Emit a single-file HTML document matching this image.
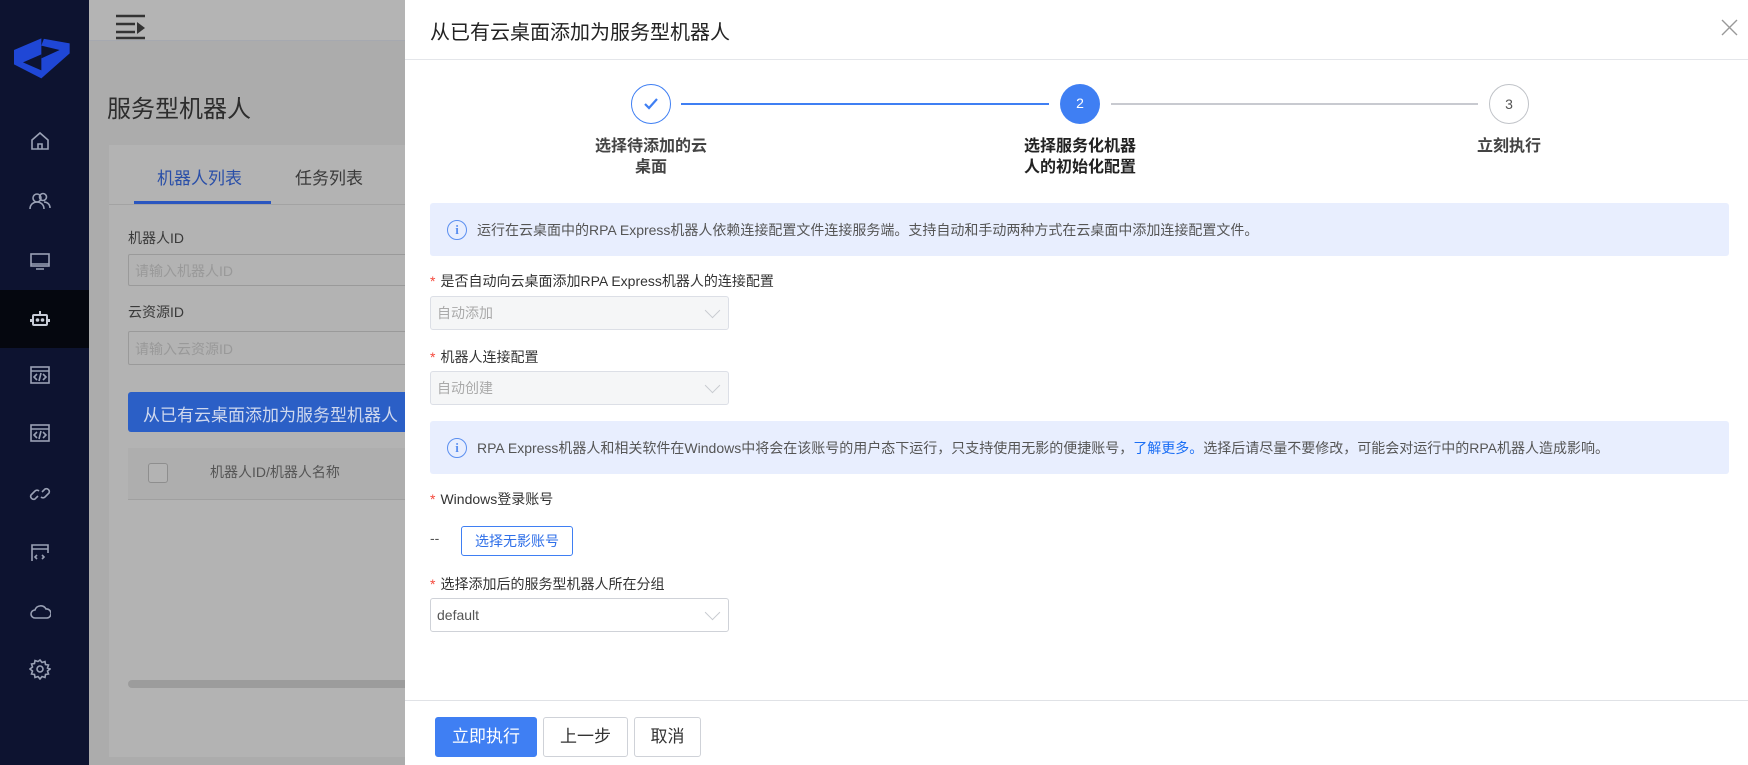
<!DOCTYPE html>
<html><head><meta charset="utf-8"><style>
*{box-sizing:border-box;margin:0;padding:0}
html,body{width:1748px;height:765px;overflow:hidden}
body{position:relative;font-family:"Liberation Sans","Noto Sans CJK SC",sans-serif;background:#acacac;color:#333}
.abs{position:absolute}
.side{left:0;top:0;width:89px;height:765px;background:#0d1330}
.side svg{position:absolute;left:29px}
.hdr{left:89px;top:0;width:320px;height:41px;background:#b4b4b4;border-bottom:1px solid #a6a9b0}
.card{left:109px;top:145px;width:300px;height:612px;background:#b3b3b3}
.panel{left:405px;top:0;width:1343px;height:765px;background:#fff}
.t14{font-size:14px}
.info{left:25px;width:1299px;background:#e8eefe;border-radius:3px;font-size:14px;color:#555;line-height:20px}
.info i{position:absolute;left:17px;top:50%;margin-top:-10px;width:20px;height:20px;border:1.8px solid #5b8ff0;border-radius:50%;color:#5b8ff0;font-style:normal;font-size:13px;text-align:center;line-height:17px;font-family:"Liberation Serif",serif;font-weight:bold}
.info span{position:absolute;left:47px;top:50%;margin-top:-10px;white-space:nowrap}
.lbl{left:25px;font-size:14px;color:#333;white-space:nowrap}
.lbl b{color:#f5483b;font-weight:normal;margin-right:5px}
.sel{left:25px;width:299px;height:34px;border:1px solid #dcdfe6;border-radius:3px;background:#f5f6f7;font-size:14px;color:#aaa;padding-left:6px;line-height:32px}
.sel:after{content:"";position:absolute;right:10px;top:8px;width:10px;height:10px;border-right:1.5px solid #c8cbd0;border-bottom:1.5px solid #c8cbd0;transform:rotate(45deg)}
.circ{width:40px;height:40px;border-radius:50%;text-align:center;line-height:38px;font-size:14px;top:84px}
.slbl{width:118px;text-align:center;font-weight:bold;font-size:16px;line-height:21px;top:136px;color:#444}
.btn{top:717px;height:40px;border:1px solid #cfd2d8;border-radius:3px;font-size:17px;text-align:center;line-height:38px;color:#333;background:#fff}
</style></head><body>
<div class="abs side">
<svg style="left:8px;top:25px" width="70" height="60" viewBox="0 0 210 180"><polygon points="18,75 100,40 185,55 185,85 100,160 18,118" fill="#1f47d6"/><polygon points="100,62 155,75 100,100" fill="#0d1330"/><polygon points="100,88 45,112 100,136" fill="#0d1330"/><polygon points="100,40 108,40 100,62" fill="#0d1330"/></svg>
<svg style="top:130px" width="22" height="22" viewBox="0 0 22 22" fill="none" stroke="#9aa1b5" stroke-width="1.6"><path d="M3 10L11 3l8 7v9H3z M9 19v-5h4v5"/></svg>
<svg style="top:190px" width="22" height="22" viewBox="0 0 22 22" fill="none" stroke="#9aa1b5" stroke-width="1.6"><circle cx="8" cy="8" r="4"/><circle cx="14" cy="7" r="3.5"/><path d="M1 19c0-5 4-7 7-7s7 2 7 7M15 12c3 0 6 2 6 6"/></svg>
<svg style="top:250px" width="22" height="22" viewBox="0 0 22 22" fill="none" stroke="#9aa1b5" stroke-width="1.6"><rect x="2" y="4" width="18" height="12"/><path d="M2 14h18M7 19h8"/></svg>
<div class="abs" style="left:0;top:290px;width:89px;height:58px;background:#05070f"></div>
<svg style="top:308px" width="22" height="22" viewBox="0 0 22 22" fill="none" stroke="#c8ccd8" stroke-width="2"><rect x="4" y="7" width="14" height="10" rx="1"/><path d="M11 3v4M2 11v3M20 11v3"/><circle cx="8.5" cy="12" r=".8" fill="#c8ccd8"/><circle cx="13.5" cy="12" r=".8" fill="#c8ccd8"/></svg>
<svg style="top:364px" width="22" height="22" viewBox="0 0 22 22" fill="none" stroke="#9aa1b5" stroke-width="1.6"><rect x="2" y="3" width="18" height="16"/><path d="M2 7h18M8 10l-3 3 3 3M14 10l3 3-3 3M12 9l-2 8"/></svg>
<svg style="top:422px" width="22" height="22" viewBox="0 0 22 22" fill="none" stroke="#9aa1b5" stroke-width="1.6"><rect x="2" y="3" width="18" height="16"/><path d="M2 7h18M8 10l-3 3 3 3M14 10l3 3-3 3M12 9l-2 8"/></svg>
<svg style="top:483px" width="22" height="22" viewBox="0 0 22 22" fill="none" stroke="#9aa1b5" stroke-width="1.6"><path d="M9 13l-3 3a3 3 0 01-4-4l4-4a3 3 0 014 0M13 9l3-3a3 3 0 014 4l-4 4a3 3 0 01-4 0"/></svg>
<svg style="top:542px" width="22" height="22" viewBox="0 0 22 22" fill="none" stroke="#9aa1b5" stroke-width="1.6"><path d="M3 19V3h16v8M3 7h16M8 13l-2 2 2 2M13 13l2 2-2 2"/></svg>
<svg style="top:601px" width="22" height="22" viewBox="0 0 22 22" fill="none" stroke="#9aa1b5" stroke-width="1.6"><path d="M6 17a4 4 0 010-8 6 6 0 0111-1 4.5 4.5 0 011 9z"/></svg>
<svg style="top:658px" width="22" height="22" viewBox="0 0 22 22" fill="none" stroke="#9aa1b5" stroke-width="1.6"><circle cx="11" cy="11" r="3"/><path d="M11 2l2 2.5 3-1 .5 3 3 .5-1 3L21 11l-2.5 2 1 3-3 .5-.5 3-3-1L11 21l-2-2.5-3 1-.5-3-3-.5 1-3L1 11l2.5-2-1-3 3-.5.5-3 3 1z"/></svg>
</div>
<div class="abs hdr"><svg style="position:absolute;left:27px;top:13px" width="30" height="28" viewBox="0 0 30 28" stroke="#333" stroke-width="2.4"><path d="M0 3h29M0 11h19M0 19h19M0 25h29"/><polygon points="21,9 29,15 21,21" fill="#333" stroke="none"/></svg></div>
<div class="abs" style="left:107px;top:89px;font-size:24px;color:#2d2d2d">服务型机器人</div>
<div class="abs card">
<div class="abs" style="left:0;top:59px;width:300px;height:1px;background:#a3a3a3"></div>
<div class="abs" style="left:48px;top:19px;font-size:17px;color:#2a4fa8">机器人列表</div>
<div class="abs" style="left:186px;top:19px;font-size:17px;color:#3a3a3a">任务列表</div>
<div class="abs" style="left:25px;top:56px;width:137px;height:3px;background:#2a56c0"></div>
<div class="abs" style="left:19px;top:83px;font-size:14px;color:#3a3a3a">机器人ID</div>
<div class="abs" style="left:19px;top:109px;width:290px;height:32px;border:1px solid #9a9a9a;border-radius:2px;font-size:14px;color:#999;padding:6px 6px">请输入机器人ID</div>
<div class="abs" style="left:19px;top:157px;font-size:14px;color:#3a3a3a">云资源ID</div>
<div class="abs" style="left:19px;top:186px;width:290px;height:34px;border:1px solid #9a9a9a;border-radius:2px;font-size:14px;color:#999;padding:7px 6px">请输入云资源ID</div>
<div class="abs" style="left:19px;top:247px;width:290px;height:40px;background:#2b5fc6;border-radius:3px;font-size:17px;color:#cfd8ee;padding:9px 15px;white-space:nowrap;overflow:hidden">从已有云桌面添加为服务型机器人</div>
<div class="abs" style="left:19px;top:303px;width:290px;height:52px;background:#aeaeae;border-bottom:1px solid #a0a0a0"></div>
<div class="abs" style="left:39px;top:318px;width:20px;height:20px;border:1px solid #8e8e8e;border-radius:3px;background:#b3b3b3"></div>
<div class="abs" style="left:101px;top:317px;font-size:14px;color:#555;white-space:nowrap">机器人ID/机器人名称</div>
<div class="abs" style="left:19px;top:535px;width:290px;height:8px;border-radius:4px;background:#9c9c9c"></div>
</div>
<div class="abs panel">
<div class="abs" style="left:25px;top:16px;font-size:20px;color:#222">从已有云桌面添加为服务型机器人</div>
<svg class="abs" style="left:1316px;top:19px" width="17" height="17" viewBox="0 0 17 17" stroke="#999" stroke-width="1.4"><path d="M1 1l15 15M16 1L1 16"/></svg>
<div class="abs" style="left:0;top:59px;width:1343px;height:1px;background:#e4e6ea"></div>
<div class="abs" style="left:276px;top:103px;width:368px;height:1.5px;background:#3f7ff3"></div>
<div class="abs" style="left:706px;top:103px;width:367px;height:1.5px;background:#c8cad0"></div>
<div class="abs circ" style="left:226px;border:1.5px solid #3f7ff3;color:#3f7ff3"><svg width="18" height="18" viewBox="0 0 18 18" style="margin-top:10px" fill="none" stroke="#3f7ff3" stroke-width="2.2"><path d="M3 9l4 4 8-9"/></svg></div>
<div class="abs circ" style="left:655px;background:#3f7ff3;color:#fff">2</div>
<div class="abs circ" style="left:1084px;border:1.5px solid #c0c3c8;color:#555">3</div>
<div class="abs slbl" style="left:187px">选择待添加的云桌面</div>
<div class="abs slbl" style="left:616px;color:#222">选择服务化机器人的初始化配置</div>
<div class="abs slbl" style="left:1045px">立刻执行</div>
<div class="abs info" style="top:203px;height:53px"><i>i</i><span>运行在云桌面中的RPA Express机器人依赖连接配置文件连接服务端。支持自动和手动两种方式在云桌面中添加连接配置文件。</span></div>
<div class="abs lbl" style="top:271px"><b>*</b>是否自动向云桌面添加RPA Express机器人的连接配置</div>
<div class="abs sel" style="top:296px">自动添加</div>
<div class="abs lbl" style="top:347px"><b>*</b>机器人连接配置</div>
<div class="abs sel" style="top:371px">自动创建</div>
<div class="abs info" style="top:421px;height:53px"><i>i</i><span>RPA Express机器人和相关软件在Windows中将会在该账号的用户态下运行，只支持使用无影的便捷账号，<a style="color:#1a6ef5">了解更多。</a>选择后请尽量不要修改，可能会对运行中的RPA机器人造成影响。</span></div>
<div class="abs lbl" style="top:489px"><b>*</b>Windows登录账号</div>
<div class="abs t14" style="left:25px;top:530px;color:#555">--</div>
<div class="abs" style="left:56px;top:526px;width:112px;height:30px;border:1px solid #3f7ff3;border-radius:3px;color:#2f6fe8;font-size:14px;text-align:center;line-height:28px">选择无影账号</div>
<div class="abs lbl" style="top:574px"><b>*</b>选择添加后的服务型机器人所在分组</div>
<div class="abs sel" style="top:598px;background:#fff;color:#555;border-color:#cfd2d8">default</div>
<div class="abs" style="left:0;top:700px;width:1343px;height:1px;background:#e0e2e6"></div>
<div class="abs btn" style="left:30px;width:102px;background:#3f7ff3;border-color:#3f7ff3;color:#fff">立即执行</div>
<div class="abs btn" style="left:138px;width:85px">上一步</div>
<div class="abs btn" style="left:229px;width:67px">取消</div>
</div>
</body></html>
